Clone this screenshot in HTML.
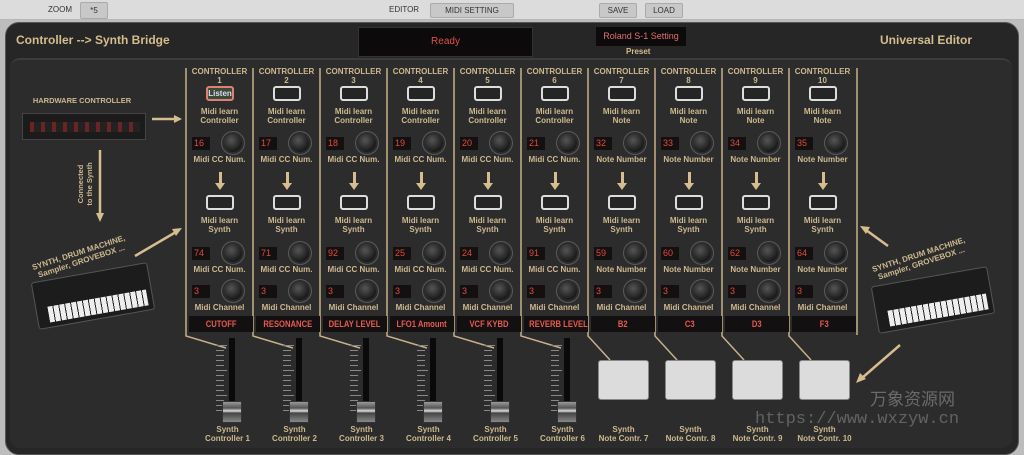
<!DOCTYPE html>
<html><head><meta charset="utf-8"><style>
*{margin:0;padding:0;box-sizing:border-box}
body{width:1024px;height:455px;background:#bdbdbd;position:relative;overflow:hidden;font-family:"Liberation Sans",Arial,sans-serif}
.a{position:absolute}
.top{left:0;top:0;width:1024px;height:20px;background:#dcdcdc;border-bottom:1px solid #b8b8b8}
.tb{font-size:8px;color:#333;top:5px}
.btn{background:#c8c8c8;border:1px solid #aaa;border-radius:2px;font-size:8px;color:#333;text-align:center;line-height:14px;height:15px;top:3px}
.outer{left:5px;top:22px;width:1014px;height:433px;background:#262626;border-radius:14px;border:1px solid #555}
.inner{left:10px;top:58px;width:1002px;height:390px;background:#2c2c2c;border-radius:10px;border-top:2px solid #3c3c3c}
.tan{color:#d6bd8f;font-weight:bold}
.lbl{font-size:8px;color:#cdb88f;font-weight:bold;text-align:center;line-height:9px;width:67px;white-space:nowrap}
.nb{background:#141010;color:#e04a40;font-size:9px;width:18px;height:13px;line-height:13px;padding-left:2px}
.knob{width:18px;height:18px;border-radius:50%;background:radial-gradient(circle at 40% 35%,#555,#1a1a1a 70%);box-shadow:0 0 0 2px #2c2c2c,0 0 0 3px #5a5a5a}
.sq{width:28px;height:15px;border:2px solid #ddd;border-radius:3px;background:#252525}
.name{background:#121010;color:#e85a50;font-size:9px;font-weight:bold;text-align:center;height:16px;line-height:16px;width:64px;white-space:nowrap;overflow:hidden}
.name span{display:inline-block;transform:scaleX(.85)}
.pad{width:51px;height:40px;background:#dcdcdc;border-radius:3px;border:1px solid #888}
.kb{width:118px;height:48px;background:#1c1c1c;border:1px solid #555;border-radius:3px;transform:rotate(-10deg)}
.keys{width:100px;height:16px;background:repeating-linear-gradient(90deg,#eee 0 5px,#222 5px 6px)}
</style></head><body>
<div class="a top"></div>
<div class="a tb" style="left:48px">ZOOM</div>
<div class="a btn" style="left:80px;width:28px;top:2px;height:17px;line-height:15px">*5</div>
<div class="a tb" style="left:389px">EDITOR</div>
<div class="a btn" style="left:430px;width:84px">MIDI SETTING</div>
<div class="a btn" style="left:599px;width:38px">SAVE</div>
<div class="a btn" style="left:645px;width:38px">LOAD</div>
<div class="a outer"></div>
<div class="a tan" style="left:16px;top:33px;font-size:12px">Controller --&gt; Synth Bridge</div>
<div class="a tan" style="left:880px;top:33px;font-size:12px">Universal Editor</div>
<div class="a" style="left:358px;top:27px;width:175px;height:30px;background:#0c0a0a;border:1px solid #333;color:#e0504a;font-size:10px;text-align:center;line-height:28px">Ready</div>
<div class="a" style="left:596px;top:27px;width:90px;height:19px;background:#0c0a0a;color:#e07070;font-size:9px;text-align:center;line-height:19px">Roland S-1 Setting</div>
<div class="a tan" style="left:626px;top:47px;font-size:8px">Preset</div>
<div class="a inner"></div>
<div class="a lbl" style="left:22px;top:96px;width:120px;font-size:7.5px">HARDWARE CONTROLLER</div>
<div class="a" style="left:22px;top:113px;width:124px;height:27px;background:#1b1b1b;border:1px solid #444"></div>
<div class="a" style="left:30px;top:122px;width:110px;height:10px;background:repeating-linear-gradient(90deg,#6a2424 0 4px,#222 4px 11px)"></div>
<div class="a lbl" style="left:55px;top:175px;width:60px;font-size:7.5px;transform:rotate(-90deg)">Connected<br>to the Synth</div>
<div class="a lbl" style="left:20px;top:248px;width:120px;font-size:8px;transform:rotate(-18deg)">SYNTH, DRUM MACHINE,<br>Sampler, GROVEBOX ...</div>
<div class="a kb" style="left:34px;top:272px"></div>
<div class="a keys" style="left:48px;top:298px;transform:rotate(-10deg)"></div>
<div class="a lbl" style="left:860px;top:250px;width:120px;font-size:8px;transform:rotate(-18deg)">SYNTH, DRUM MACHINE,<br>Sampler, GROVEBOX ...</div>
<div class="a kb" style="left:874px;top:276px"></div>
<div class="a keys" style="left:888px;top:302px;transform:rotate(-10deg)"></div>
<svg class="a" style="left:0;top:0" width="1024" height="455">
<g stroke="#d6bd8f" stroke-width="2.5" fill="#d6bd8f">
<line x1="152" y1="119" x2="176" y2="119"/><polygon points="182,119 174,115 174,123" stroke="none"/>
<line x1="100" y1="150" x2="100" y2="215"/><polygon points="100,222 96,213 104,213" stroke="none"/>
<line x1="135" y1="256" x2="176" y2="232"/><polygon points="182,228 172,229 176,236" stroke="none"/>
<line x1="888" y1="246" x2="866" y2="230"/><polygon points="860,226 870,227 866,234" stroke="none"/>
<line x1="900" y1="345" x2="862" y2="378"/><polygon points="856,383 860,373 866,379" stroke="none"/>
</g>
<g id="lines" stroke="#c8b089" stroke-width="1.5" fill="none"></g>
</svg>
<div id="cols"></div>
<div class="a" style="left:870px;top:385px;font-size:17px;color:rgba(200,200,200,.4);font-family:'Noto Sans CJK SC',sans-serif">万象资源网</div>
<div class="a" style="left:755px;top:410px;font-size:17px;color:rgba(200,200,200,.35);font-family:'Liberation Mono',monospace">https://www.wxzyw.cn</div>
<script>
var names=["CUTOFF","RESONANCE","DELAY LEVEL","LFO1 Amount","VCF KYBD","REVERB LEVEL","B2","C3","D3","F3"];
var n1=[16,17,18,19,20,21,32,33,34,35],n2=[74,71,92,25,24,91,59,60,62,64];
var h="",L="";
for(var i=0;i<10;i++){
 var x=Math.round(186+i*67);var note=i>=6;
 h+='<div class="a lbl" style="left:'+(x-3)+'px;top:67px;width:73px">CONTROLLER<br>'+(i+1)+'</div>';
 var cx=x+34;
 h+='<div class="a sq" style="left:'+(cx-14)+'px;top:86px;'+(i==0?'border-color:#e08070;background:#3a4a3a;color:#dde;font-size:8px;text-align:center;line-height:11px;font-weight:bold':'')+'">'+(i==0?'Listen':'')+'</div>';
 h+='<div class="a lbl" style="left:'+x+'px;top:107px">Midi learn<br>'+(note?'Note':'Controller')+'</div>';
 var rows=[[137,n1[i],note?'Note Number':'Midi CC Num.'],[247,n2[i],note?'Note Number':'Midi CC Num.'],[285,3,'Midi Channel']];
 rows.forEach(function(r){
  h+='<div class="a nb" style="left:'+(x+6)+'px;top:'+r[0]+'px">'+r[1]+'</div>';
  h+='<div class="a knob" style="left:'+(x+38)+'px;top:'+(r[0]-3)+'px"></div>';
  h+='<div class="a lbl" style="left:'+x+'px;top:'+(r[0]+18)+'px">'+r[2]+'</div>';
 });
 h+='<div class="a sq" style="left:'+(cx-14)+'px;top:195px"></div>';
 h+='<div class="a lbl" style="left:'+x+'px;top:216px">Midi learn<br>Synth</div>';
 h+='<div class="a" style="left:'+(cx-1)+'px;top:172px;width:3px;height:12px;background:#d6bd8f"></div><div class="a" style="left:'+(cx-5)+'px;top:183px;border-left:5px solid transparent;border-right:5px solid transparent;border-top:7px solid #d6bd8f"></div>';
 h+='<div class="a name" style="left:'+(x+3)+'px;top:316px"><span>'+names[i]+'</span></div>';
 L+='<polyline points="'+x+',68 '+x+',336 '+(note?x+22+','+360:x+40+','+348)+'"/>';
 if(!note){
  var fx=x+43;
  h+='<div class="a" style="left:'+fx+'px;top:338px;width:6px;height:66px;background:#0a0a0a"></div>';
  for(var t=0;t<14;t++)h+='<div class="a" style="left:'+(x+30)+'px;top:'+(345+t*5)+'px;width:'+(t%5==0?11:8)+'px;height:1px;background:#888"></div>';
  h+='<div class="a" style="left:'+(fx-7)+'px;top:401px;width:20px;height:22px;background:linear-gradient(#999,#555 30%,#ddd 45%,#444 55%,#888);border:1px solid #333"></div>';
  h+='<div class="a lbl" style="left:'+(x+8)+'px;top:425px">Synth<br>Controller '+(i+1)+'</div>';
 }else{
  h+='<div class="a pad" style="left:'+(x+10)+'px;top:360px"></div>';
  h+='<div class="a lbl" style="left:'+(x+2)+'px;top:425px">Synth<br>Note Contr. '+(i+1)+'</div>';
 }
}
L+='<line x1="857" y1="68" x2="857" y2="335"/>';
document.getElementById("cols").innerHTML=h;
document.getElementById("lines").innerHTML=L;
</script>
</body></html>
